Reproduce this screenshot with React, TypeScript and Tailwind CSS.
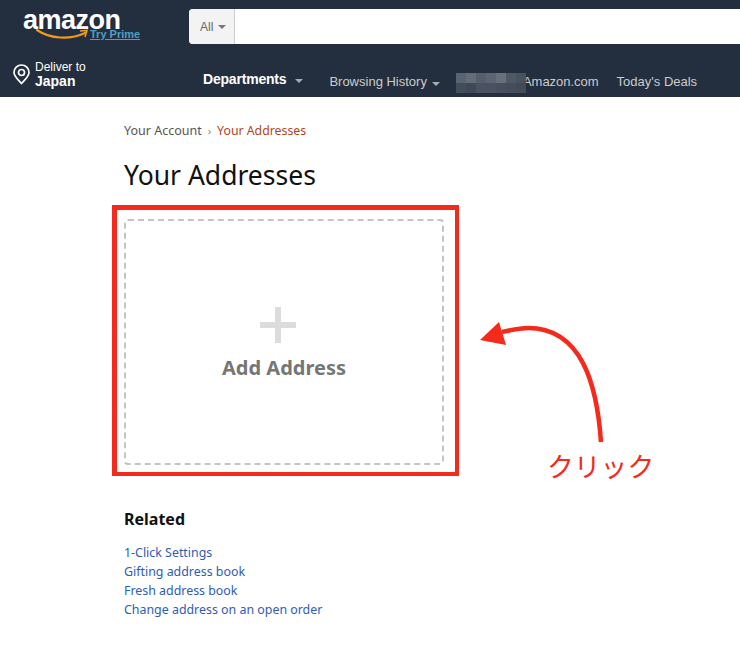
const sans = "font-['Noto_Sans',sans-serif]";

// pixelated name in the nav
const blurTop = ["#5a6370", "#646c78", "#555e6b", "#5d6572", "#68707c", "#4f5866", "#49525f"];
const blurBottom = ["#434c5a", "#3f4856", "#4a5260", "#4a5261", "#474f5e", "#454d5b", "#434b59"];

const links = [
  "1-Click Settings",
  "Gifting address book",
  "Fresh address book",
  "Change address on an open order",
];

const Caret = ({ color = "border-t-[#a6abb1]" }: { color?: string }) => (
  <span className={`inline-block w-0 h-0 border-x-[4px] border-x-transparent border-t-[4px] ${color}`} />
);

const Header = () => (
  <header className="h-[97px] bg-[#232f3e] font-['Liberation_Sans',sans-serif]">
    {/* top row */}
    <div className="flex h-[53px] pt-[9px]">
      <div className="relative w-[189px] shrink-0">
        <span className="absolute left-[23px] top-[2px] text-[27px] leading-[18px] font-bold tracking-[-0.5px] text-white">amazon</span>
        <svg className="absolute left-[36px] top-[19px]" width="54" height="13" viewBox="0 0 54 13" fill="none">
          <path d="M1 2 C 14 11, 34 12, 49 5" stroke="#f09a1d" strokeWidth="2.2" strokeLinecap="round" />
          <path d="M44 3 L51 2.5 L49 9" stroke="#f09a1d" strokeWidth="1.6" />
        </svg>
        <span className="absolute left-[90px] top-[20px] text-[11px] leading-[11px] font-bold text-[#4ba0c8] underline">Try Prime</span>
      </div>
      <div className="flex flex-1 h-[35px] bg-white rounded-l-[4px] overflow-hidden">
        <div className="flex items-center gap-[5px] w-[46px] pl-[11px] bg-[#f3f3f3] border-r border-[#cdcdcd] text-[12px] text-[#666]">
          All
          <Caret color="border-t-[#777]" />
        </div>
      </div>
    </div>
    {/* bottom row */}
    <div className="flex h-[44px]">
      <div className="flex items-start w-[203px] shrink-0 pl-[13px] pt-[7px]">
        <svg className="mt-[4px]" width="17" height="21" viewBox="0 0 17 21" fill="none" stroke="#fff" strokeWidth="1.7">
          <path d="M8.5 19.5 C 5 15.5, 1 12.5, 1 8.5 A 7.5 7.5 0 0 1 16 8.5 C 16 12.5, 12 15.5, 8.5 19.5 Z" />
          <circle cx="8.5" cy="8.5" r="3" />
        </svg>
        <div className="ml-[5px] text-white">
          <div className="text-[12px] leading-[14px]">Deliver to</div>
          <div className="text-[14px] leading-[14px] font-bold">Japan</div>
        </div>
      </div>
      <nav className="flex items-center h-[36px] mt-[11px] text-[13px] text-[#ccc]">
        <span className="text-[14px] font-bold text-white tracking-[-0.2px] mt-[-5px]">Departments</span>
        <span className="ml-[9px] mr-[26px] mt-[-7px]"><Caret /></span>
        <span>Browsing History</span>
        <span className="ml-[5px] mr-[16px]"><Caret /></span>
        <div className="w-[70px] h-[20px] mt-[2px] grid grid-cols-7 z-10">
          {[...blurTop, ...blurBottom].map((c, i) => (
            <span key={i} style={{ background: c }} />
          ))}
        </div>
        <span className="ml-[-3px] tracking-[-0.02px]">Amazon.com</span>
        <span className="ml-[18px]">Today's Deals</span>
      </nav>
    </div>
  </header>
);

export default function App() {
  return (
    <div className={`relative w-[740px] h-[651px] bg-white overflow-hidden ${sans}`}>
      <Header />
      <main className="pl-[124px]">
        <div className="flex items-center h-[18px] mt-[25px] text-[12.5px] text-[#555]">
          Your Account
          <span className="mx-[6px] text-[11px] text-[#888]">›</span>
          <span className="text-[12.3px] text-[#b0461b]">Your Addresses</span>
        </div>
        <h1 className="mt-[17px] text-[26.5px] leading-[36px] text-[#111]">Your Addresses</h1>

        {/* red highlight round the card */}
        <div className="w-[347px] h-[271px] ml-[-12px] mt-[12px] border-[4px] border-t-[5px] border-l-[5px] border-[#f42a1c] pt-[9px] pl-[7px]">
          <div className="flex flex-col items-center w-[320px] h-[246px] rounded-[4px] border-2 border-dashed border-[#c4c4c4] pt-[86px]">
            <div className="relative w-[36px] h-[36px] ml-[-13px]">
              <span className="absolute left-[15px] top-0 w-[6px] h-[36px] bg-[#dcdcdc]" />
              <span className="absolute left-0 top-[15px] w-[36px] h-[6px] bg-[#dcdcdc]" />
            </div>
            <span className="mt-[12px] text-[20px] leading-[26px] font-bold text-[#767676]">Add Address</span>
          </div>
        </div>

        <h2 className="mt-[32px] text-[16px] leading-[22px] font-bold text-[#111]">Related</h2>
        <ul className="mt-[13px] text-[12.4px] leading-[19px] text-[#2f5cb4]">
          {links.map((l) => (
            <li key={l}>{l}</li>
          ))}
        </ul>
      </main>

      {/* annotation arrow */}
      <svg className="absolute left-[470px] top-[315px]" width="140" height="130" viewBox="0 0 140 130" fill="none">
        <path d="M131 127 C 127 70, 112 13, 58 13 C 50 13, 42 15, 32 17" stroke="#f42a1c" strokeWidth="4.5" />
        <path d="M10 25 L29 7 L36 30 Z" fill="#f42a1c" />
      </svg>
      <span className="absolute left-[547px] top-[449px] text-[26.8px] leading-[34px] text-[#f42a1c] font-['Noto_Sans_CJK_JP',sans-serif]">クリック</span>
    </div>
  );
}
